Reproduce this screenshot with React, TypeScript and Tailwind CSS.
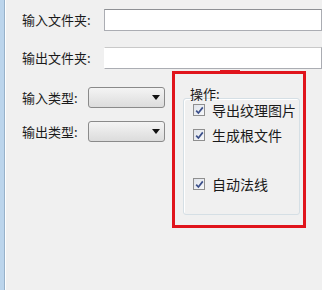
import React from 'react';

const font = { fontFamily: '"Microsoft YaHei", "Noto Sans CJK SC", "Noto Sans", sans-serif' };

function TextBox({ className = '' }: { className?: string }) {
  return <div className={`h-[22px] flex-1 bg-white border border-[#abadb3] border-t-[#8e9094] ${className}`} />;
}

function Combo() {
  return (
    <div className="w-[77px] h-[21px] rounded-[3px] border border-[#8a8a8a] bg-gradient-to-b from-[#f4f4f4] to-[#dcdcdc] flex items-center justify-end pr-[4px]">
      <svg width="8" height="5" viewBox="0 0 8 5">
        <path d="M0 0h8L4 5z" fill="#111" />
      </svg>
    </div>
  );
}

function Check({ label }: { label: string }) {
  return (
    <div className="flex items-center gap-[7px]">
      <div className="w-[12px] h-[12px] border border-[#8f8f8f] bg-gradient-to-br from-[#dfe3ea] to-[#f7f8fa] flex items-center justify-center">
        <svg width="9" height="9" viewBox="0 0 9 9">
          <path d="M1.2 4.6 3.4 7 7.8 1.4" stroke="#3b4f8a" strokeWidth="1.7" fill="none" />
        </svg>
      </div>
      <span className="text-[14px] leading-none text-[#1a1a1a] whitespace-nowrap">{label}</span>
    </div>
  );
}

export default function App() {
  return (
    <div className="w-[322px] h-[290px] bg-[#f0f0f0] flex overflow-hidden" style={font}>
      {/* window frame */}
      <div className="w-[4px] h-full bg-[#bcd5ec]" />
      <div className="w-[1px] h-full bg-[#98b2ca]" />
      <div className="w-[1px] h-full bg-white" />

      <div className="flex-1 flex flex-col pt-[9px] text-[13px] text-[#1a1a1a] whitespace-nowrap">
        <div className="flex items-center">
          <span className="w-[98px] pl-[16px] shrink-0">输入文件夹:</span>
          <TextBox />
        </div>
        <div className="flex items-center mt-[16px]">
          <span className="w-[98px] pl-[16px] shrink-0">输出文件夹:</span>
          <TextBox className="border-l-white border-t-[#c9c9c9]" />
        </div>

        <div className="flex mt-[2px]">
          <div className="w-[166px] shrink-0 flex flex-col pt-[16px] pl-[16px] gap-[13px]">
            <div className="flex items-center">
              <span className="w-[66px] shrink-0">输入类型:</span>
              <Combo />
            </div>
            <div className="flex items-center">
              <span className="w-[66px] shrink-0">输出类型:</span>
              <Combo />
            </div>
          </div>

          <div className="relative w-[134px] h-[157px] border-[3px] border-[#e0141c] pl-[8px] pr-[3px] pt-[13px]">
            <div className="absolute -top-[4px] left-[45px] w-[20px] h-[2px] bg-[#e0141c]" />
            <div className="pl-[7px] leading-none">操作:</div>
            <div className="h-[117px] mt-[-2px] border border-[#d5dfe5] rounded-[3px] shadow-[inset_1px_1px_0_white] flex flex-col pl-[9px] pt-[4px]">
              <Check label="导出纹理图片" />
              <div className="mt-[11px]">
                <Check label="生成根文件" />
              </div>
              <div className="mt-[35px]">
                <Check label="自动法线" />
              </div>
            </div>
          </div>
        </div>
      </div>
    </div>
  );
}
